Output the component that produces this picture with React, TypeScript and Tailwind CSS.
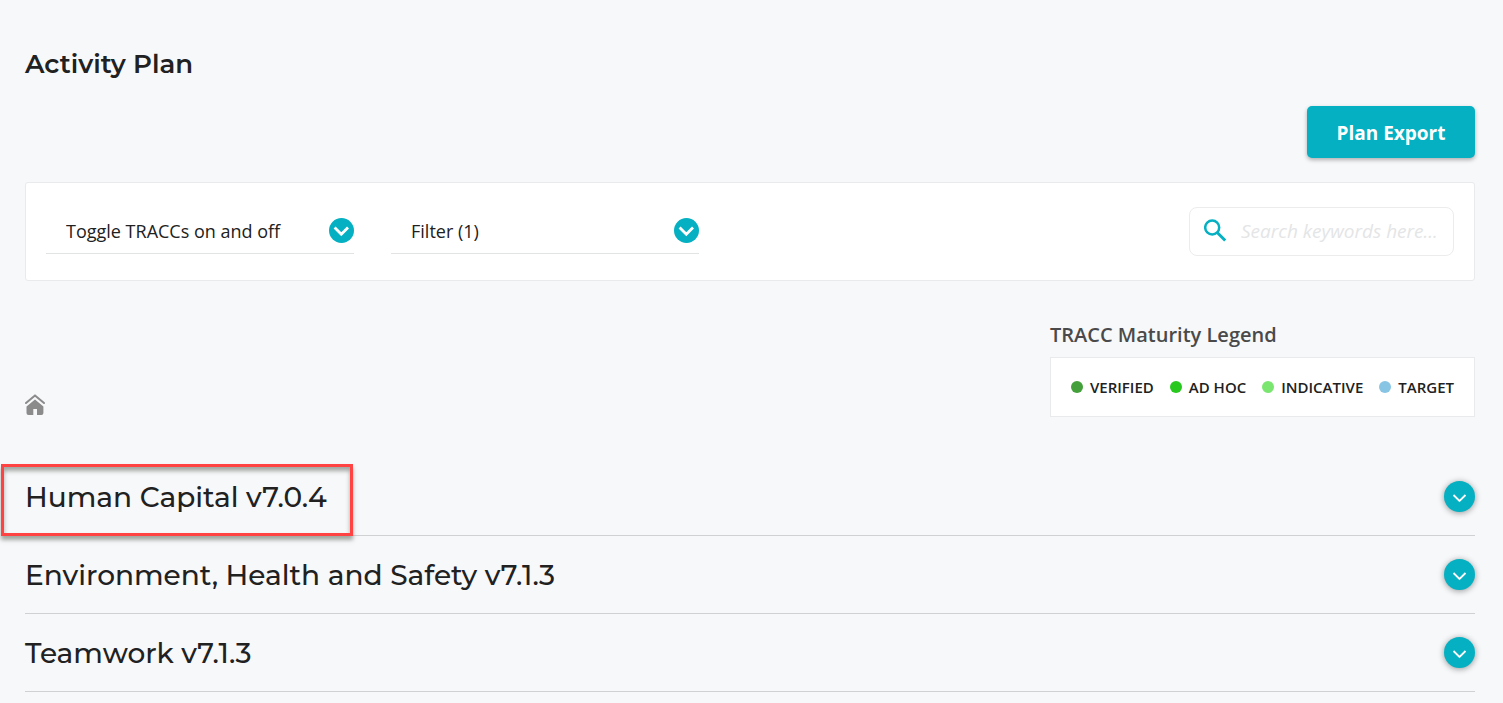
const SELECTS = [
  { id: 'tracc-toggle', label: 'Toggle TRACCs on and off' },
  { id: 'plan-filter', label: 'Filter (1)' },
];

const LEGEND = [
  { label: 'VERIFIED', color: 'bg-[#43a03a]' },
  { label: 'AD HOC', color: 'bg-[#28c81e]' },
  { label: 'INDICATIVE', color: 'bg-[#7ae670]' },
  { label: 'TARGET', color: 'bg-[#88c4e4]' },
];

const TRACCS = [
  { name: 'Human Capital v7.0.4', highlighted: true },
  { name: 'Environment, Health and Safety v7.1.3', highlighted: false },
  { name: 'Teamwork v7.1.3', highlighted: false },
];

function SelectArrow() {
  return (
    <svg
      className="pointer-events-none col-start-1 row-start-1 self-center justify-self-end"
      width="25"
      height="25"
      viewBox="0 0 25 25"
      aria-hidden="true"
    >
      <circle cx="12.5" cy="12.5" r="12.5" fill="#04b0c1" />
      <path d="M5.6 9.6l6.7 6.7L19 9.6" fill="none" stroke="#fff" strokeWidth="2.8" />
    </svg>
  );
}

function Toolbar() {
  return (
    <section className="mt-6 flex items-start justify-between rounded-[3px] border border-[#e9eaeb] bg-white px-5 py-6">
      <div className="flex gap-[37px]">
        {SELECTS.map(({ id, label }) => (
          <div key={id} className="grid w-[308px] border-b border-[#e2e3e3]">
            <select
              id={id}
              aria-label={label}
              className="col-start-1 row-start-1 h-[46px] w-full appearance-none bg-transparent pt-0.5 pr-8 pl-5 text-lg text-[#212121] outline-none"
            >
              <option>{label}</option>
            </select>
            <SelectArrow />
          </div>
        ))}
      </div>

      <label className="flex h-[49px] w-[265px] items-center rounded-lg border border-[#ececec] pb-0.5 pl-[14px]">
        <svg className="shrink-0" width="23" height="23" viewBox="0 0 23 23" aria-hidden="true">
          <circle cx="8.2" cy="8.5" r="7" fill="none" stroke="#04b0c1" strokeWidth="2.5" />
          <path d="M13.2 13.5l8 8" fill="none" stroke="#04b0c1" strokeWidth="3" />
        </svg>
        <input
          type="search"
          aria-label="Search keywords"
          placeholder="Search keywords here..."
          className="ml-[14px] w-full min-w-0 bg-transparent pt-0.5 text-[19px] italic outline-none placeholder:text-[#e4e5e6]"
        />
      </label>
    </section>
  );
}

function Legend() {
  return (
    <section>
      <h2 className="text-xl leading-7 font-semibold text-[#4a4a4a]">TRACC Maturity Legend</h2>
      <ul className="mt-2 flex h-[60px] items-center gap-4 border border-[#e9eaeb] bg-white px-5">
        {LEGEND.map(({ label, color }) => (
          <li key={label} className="flex items-center gap-[7px] text-[15px] font-semibold text-[#212121]">
            <span className={`size-3 rounded-full ${color}`} />
            {label}
          </li>
        ))}
      </ul>
    </section>
  );
}

export default function App() {
  return (
    <main className="min-h-screen bg-[#f7f8fa] pt-12 pr-7 pl-[25px] font-['Open_Sans',sans-serif] text-[#212121]">
      <h1 className="font-['Montserrat','Inter',sans-serif] text-[26px] leading-8 font-semibold">Activity Plan</h1>

      <div className="mt-[26px] flex justify-end">
        <button
          type="button"
          className="h-[52px] w-[168px] rounded-[5px] bg-[#04b0c1] pt-0.5 text-[19px] font-bold text-white shadow-[0_2px_4px_rgba(0,0,0,0.3)]"
        >
          Plan Export
        </button>
      </div>

      <Toolbar />

      <div className="mt-10 flex items-end justify-between">
        <a href="#" aria-label="Home" className="pb-px">
          <svg width="20" height="22" viewBox="0 0 20 22" aria-hidden="true">
            <path
              d="M1 9L10 1.4 19 9"
              fill="none"
              stroke="#8b8b8b"
              strokeWidth="2"
              strokeLinecap="round"
              strokeLinejoin="round"
            />
            <path d="M10 5.6l8.4 7V19a2 2 0 0 1-2 2H12v-6H8.3v6H3.5a2 2 0 0 1-2-2v-6.4z" fill="#8b8b8b" />
          </svg>
        </a>
        <Legend />
      </div>

      <ul className="mt-[41px]">
        {TRACCS.map(({ name, highlighted }) => (
          <li key={name} className="relative flex h-[78px] items-center justify-between border-b border-[#d0d1d3]">
            <h2 className="font-['Montserrat','Inter',sans-serif] text-[28px] leading-9 font-medium">{name}</h2>
            <button
              type="button"
              aria-label={`Expand ${name}`}
              className="flex size-[31px] items-center justify-center rounded-full bg-[#04b0c1] shadow-[0_1px_6px_rgba(0,0,0,0.4)]"
            >
              <svg width="15" height="15" viewBox="0 0 15 15" aria-hidden="true">
                <path d="M1.5 6l6 6 6-6" fill="none" stroke="#fff" strokeWidth="1.8" />
              </svg>
            </button>
            {highlighted && (
              <span className="pointer-events-none absolute top-[6px] -left-6 h-[72px] w-[352px] border-3 border-[#ff4343] shadow-[0_4px_4px_rgba(80,88,75,0.5),inset_0_4px_4px_rgba(80,88,75,0.5)]" />
            )}
          </li>
        ))}
      </ul>
    </main>
  );
}
